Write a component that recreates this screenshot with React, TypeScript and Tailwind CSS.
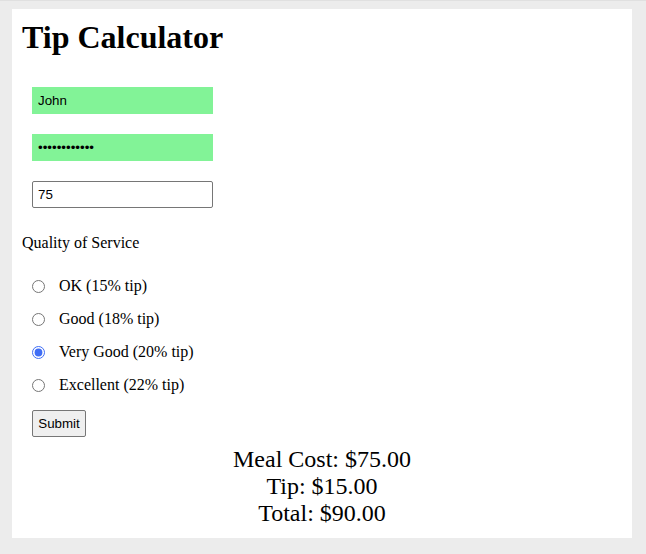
import { useState } from "react"

const options = [
  { label: "OK (15% tip)", value: 0.15 },
  { label: "Good (18% tip)", value: 0.18 },
  { label: "Very Good (20% tip)", value: 0.2 },
  { label: "Excellent (22% tip)", value: 0.22 },
]

export default function App() {
  const [name, setName] = useState("John")
  const [pass, setPass] = useState("secretpass12")
  const [cost, setCost] = useState("75")
  const [rate, setRate] = useState(0.2)

  const meal = parseFloat(cost) || 0
  const tip = meal * rate

  return (
    <div className="min-h-screen bg-[#ececec] border-t border-[#e0e0e0] pt-[8px] px-[12px] font-['Liberation_Serif',serif] text-black">
      <div className="w-[620px] h-[529px] bg-white pt-[10px] px-[10px]">
        <h1 className="text-[32px] font-bold leading-[37px]">Tip Calculator</h1>

        {/* INPUTS */}
        <div className="mt-[31px] ml-[10px] flex flex-col gap-[20px] font-['Liberation_Sans',sans-serif] text-[13.33px]">
          <input
            value={name}
            onChange={(e) => setName(e.target.value)}
            className="w-[181px] h-[27px] bg-[#82f397] px-[6px] outline-none"
          />
          <input
            type="password"
            value={pass}
            onChange={(e) => setPass(e.target.value)}
            className="w-[181px] h-[27px] bg-[#82f397] px-[6px] outline-none"
          />
          <input
            value={cost}
            onChange={(e) => setCost(e.target.value)}
            className="w-[181px] h-[27px] border border-[#767676] rounded-[2px] px-[5px] outline-none"
          />
        </div>

        <p className="mt-[26px] text-[16px] leading-[18px]">Quality of Service</p>

        {/* RADIOS */}
        <div className="mt-[25px] flex flex-col gap-[15px] text-[16px] leading-[18px]">
          {options.map((o) => (
            <label key={o.label} className="flex items-center h-[18px]">
              <input
                type="radio"
                name="service"
                checked={rate === o.value}
                onChange={() => setRate(o.value)}
                className="ml-[10px] w-[13px] h-[13px] accent-[#3f6df5]"
              />
              <span className="ml-[14px]">{o.label}</span>
            </label>
          ))}
        </div>

        <button className="mt-[16px] ml-[10px] w-[54px] h-[27px] bg-[#efefef] border border-[#767676] rounded-[2px] font-['Liberation_Sans',sans-serif] text-[13.33px]">
          Submit
        </button>

        {/* RESULTS */}
        <div className="mt-[9px] text-center text-[24px] leading-[27px]">
          <p>Meal Cost: ${meal.toFixed(2)}</p>
          <p>Tip: ${tip.toFixed(2)}</p>
          <p>Total: ${(meal + tip).toFixed(2)}</p>
        </div>
      </div>
    </div>
  )
}
